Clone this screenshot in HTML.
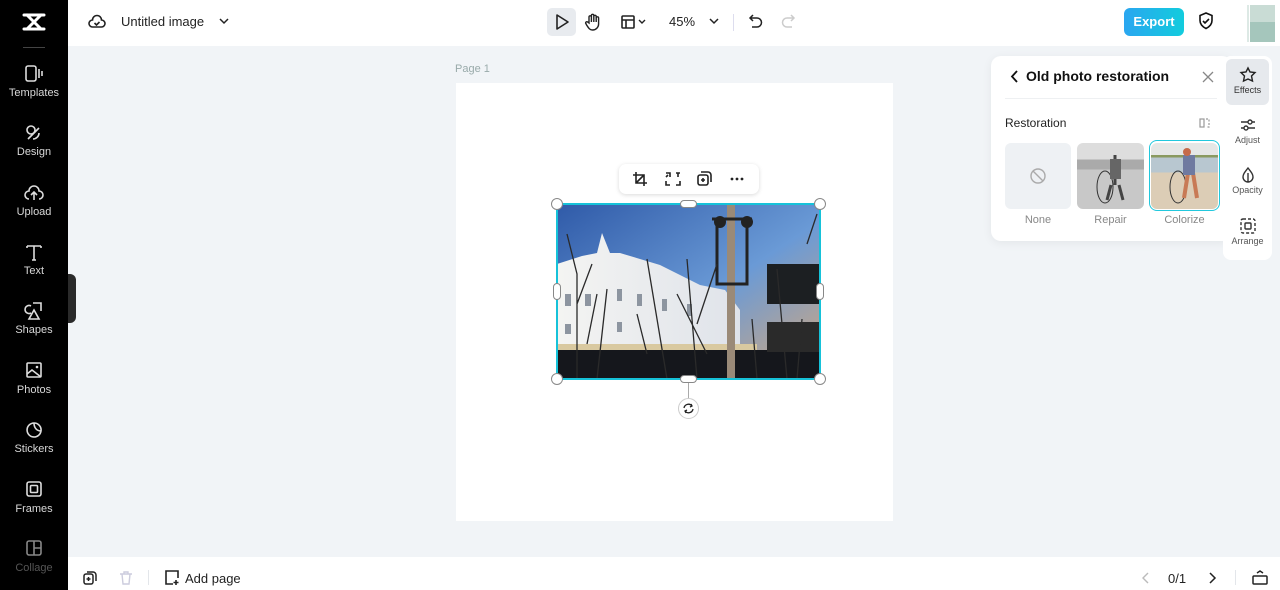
<!DOCTYPE html>
<html><head><meta charset="utf-8"><style>
*{margin:0;padding:0;box-sizing:border-box}
body{width:1280px;height:590px;overflow:hidden;background:#f1f4f7;font-family:"Liberation Sans",sans-serif;position:relative;color:#1f2329}
.abs{position:absolute}
.side{left:0;top:0;width:68px;height:590px;background:#000}
.si{position:absolute;left:0;width:68px;text-align:center;color:#d8d8d8;font-size:11px}
.si svg{display:block;margin:0 auto 4px}
.top{left:68px;top:0;width:1212px;height:46px;background:#fff}
.bot{left:68px;top:557px;width:1212px;height:33px;background:#fff}
svg{overflow:visible}
.rt{position:absolute;left:0;width:49px;text-align:center;font-size:9px;color:#555}
.rt svg{display:block;margin:0 auto 2px}
</style></head><body>
<div class="abs side">
 <svg class="abs" style="left:22px;top:12px" width="24" height="20" viewBox="0 0 24 20"><g fill="none" stroke="#fff" stroke-width="3" stroke-linecap="round"><path d="M2 3h20M2 17h20M5 3l14 14M19 3L5 17"/></g></svg>
 <div class="abs" style="left:23px;top:47px;width:22px;height:1px;background:#444"></div>
 <div class="si" style="top:65px"><svg width="20" height="18" viewBox="0 0 20 18"><rect x="2" y="1" width="10" height="15" rx="2" fill="none" stroke="#ddd" stroke-width="1.6"/><path d="M15 4v9M18 6v5" stroke="#ddd" stroke-width="1.6"/></svg>Templates</div>
 <div class="si" style="top:124px"><svg width="20" height="18" viewBox="0 0 20 18"><circle cx="7" cy="6" r="4" fill="none" stroke="#ddd" stroke-width="1.6"/><path d="M4 15l11-11M9 15a6 6 0 0 0 6-6" fill="none" stroke="#ddd" stroke-width="1.6"/></svg>Design</div>
 <div class="si" style="top:184px"><svg width="20" height="18" viewBox="0 0 20 18"><path d="M5 15a4 4 0 0 1 0-8 5 5 0 0 1 10 0 4 4 0 0 1 0 8M10 16V9M7 11l3-3 3 3" fill="none" stroke="#ddd" stroke-width="1.6"/></svg>Upload</div>
 <div class="si" style="top:243px"><svg width="20" height="18" viewBox="0 0 20 18"><path d="M3 3h14M10 3v14M3 3v2M17 3v2M8 17h4" fill="none" stroke="#ddd" stroke-width="1.6"/></svg>Text</div>
 <div class="si" style="top:302px"><svg width="20" height="18" viewBox="0 0 20 18"><path d="M7 4a4 4 0 1 0 0 7M9 1h8v8M10 8l-5 9h10z" fill="none" stroke="#ddd" stroke-width="1.6"/></svg>Shapes</div>
 <div class="si" style="top:362px"><svg width="20" height="18" viewBox="0 0 20 18"><rect x="3" y="1" width="14" height="14" rx="1" fill="none" stroke="#ddd" stroke-width="1.6"/><path d="M3 12l5-4 9 7" fill="none" stroke="#ddd" stroke-width="1.6"/><circle cx="13" cy="5" r="1.3" fill="#ddd"/></svg>Photos</div>
 <div class="si" style="top:421px"><svg width="20" height="18" viewBox="0 0 20 18"><path d="M10 2a7 7 0 1 0 7 8c-4 0-7-3-7-8z M10 2a7 7 0 0 1 7 8" fill="none" stroke="#ddd" stroke-width="1.6"/></svg>Stickers</div>
 <div class="si" style="top:481px"><svg width="20" height="18" viewBox="0 0 20 18"><rect x="3" y="1" width="14" height="14" rx="2" fill="none" stroke="#ddd" stroke-width="1.6"/><rect x="6.5" y="4.5" width="7" height="7" rx="1" fill="none" stroke="#ddd" stroke-width="1.6"/></svg>Frames</div>
 <div class="si" style="top:540px;color:#555"><svg width="20" height="18" viewBox="0 0 20 18"><rect x="3" y="1" width="14" height="14" rx="2" fill="none" stroke="#888" stroke-width="1.6"/><path d="M10 1v14M10 8h7" stroke="#888" stroke-width="1.6"/></svg>Collage</div>
</div>
<div class="abs" style="left:68px;top:274px;width:8px;height:49px;background:#2a2a2a;border-radius:0 6px 6px 0"></div>

<div class="abs top">
 <svg class="abs" style="left:20px;top:13px" width="18" height="18" viewBox="0 0 18 18"><path d="M4.5 14a3.5 3.5 0 0 1 0-7 4.5 4.5 0 0 1 9 0 3.5 3.5 0 0 1 0 7z M6.5 10l2 2 3-3" fill="none" stroke="#222" stroke-width="1.6"/></svg>
 <div class="abs" style="left:53px;top:14px;font-size:13px;color:#222">Untitled image</div>
 <svg class="abs" style="left:151px;top:18px" width="10" height="8"><path d="M1 1l4 4 4-4" fill="none" stroke="#222" stroke-width="1.5"/></svg>
 <div class="abs" style="left:479px;top:8px;width:29px;height:28px;background:#e8ebef;border-radius:5px"></div>
 <svg class="abs" style="left:487px;top:14px" width="14" height="16"><path d="M2 1l11 7-11 7z" fill="none" stroke="#222" stroke-width="1.6" stroke-linejoin="round"/></svg>
 <svg class="abs" style="left:517px;top:13px" width="16" height="18" viewBox="0 0 16 18"><path d="M4 10V4a1.2 1.2 0 0 1 2.4 0V9V2.5a1.2 1.2 0 0 1 2.4 0V9V3.5a1.2 1.2 0 0 1 2.4 0V9V5a1.2 1.2 0 0 1 2.4 0v6a6 6 0 0 1-6 6c-3 0-4-2-6-5l-1-2a1.2 1.2 0 0 1 2-1z" fill="none" stroke="#222" stroke-width="1.4"/></svg>
 <svg class="abs" style="left:553px;top:15px" width="26" height="14"><rect x="1" y="1" width="12" height="12" rx="1" fill="none" stroke="#222" stroke-width="1.6"/><path d="M1 5h12M5 5v8" stroke="#222" stroke-width="1.6"/><path d="M18 5l3 3 3-3" fill="none" stroke="#222" stroke-width="1.4"/></svg>
 <div class="abs" style="left:601px;top:14px;font-size:13px;color:#222">45%</div>
 <svg class="abs" style="left:641px;top:18px" width="10" height="8"><path d="M1 1l4 4 4-4" fill="none" stroke="#222" stroke-width="1.5"/></svg>
 <div class="abs" style="left:665px;top:14px;width:1px;height:17px;background:#dde"></div>
 <svg class="abs" style="left:681px;top:14px" width="14" height="16"><path d="M4 1L1 4l3 3M1 4h7a4.5 4.5 0 0 1 0 9H3" fill="none" stroke="#222" stroke-width="1.5"/></svg>
 <svg class="abs" style="left:713px;top:14px" width="14" height="16"><path d="M10 1l3 3-3 3M13 4H6a4.5 4.5 0 0 0 0 9h5" fill="none" stroke="#ccc" stroke-width="1.5"/></svg>
 <div class="abs" style="left:1056px;top:8px;width:60px;height:28px;border-radius:6px;background:linear-gradient(90deg,#2aa6f0,#12ccdd);color:#fff;font-weight:bold;font-size:13px;text-align:center;line-height:28px">Export</div>
 <svg class="abs" style="left:1130px;top:12px" width="16" height="18"><path d="M8 1l6 2.5v5c0 4-3 6.5-6 8-3-1.5-6-4-6-8v-5z M5 9l2 2 4-4" fill="none" stroke="#111" stroke-width="1.6"/></svg>
 <div class="abs" style="left:1162px;top:5px;width:45px;height:37px;background:linear-gradient(90deg,#fff 0 38%,#dde9e5 38% 42%,#fff 42% 44%,#c9dcd5 44% 100%)"></div>
 <div class="abs" style="left:1182px;top:22px;width:25px;height:20px;background:#a5c6bc"></div>
</div>

<div class="abs" style="left:455px;top:63px;font-size:11px;color:#9aa">Page 1</div>
<div class="abs" style="left:456px;top:83px;width:437px;height:438px;background:#fff"></div>

<div class="abs" style="left:619px;top:164px;width:140px;height:30px;background:#fff;border-radius:7px;box-shadow:0 1px 4px rgba(0,0,0,.15)"></div>
<svg class="abs" style="left:632px;top:171px" width="120" height="16" viewBox="0 0 120 16">
 <g fill="none" stroke="#222" stroke-width="1.6"><path d="M4 1v11h11M1 4h11v11M4 12L12 4"/>
 <path d="M34 2h4v4M34 10v4h4M44 2h4M46 2v4M48 10v4h-4M34 6l2-2"/>
 <rect x="66" y="4" width="10" height="10" rx="2"/><path d="M69 1h7a3 3 0 0 1 3 3v7M71 7v4M69 9h4"/></g>
 <circle cx="100" cy="8" r="1.4" fill="#222"/><circle cx="105" cy="8" r="1.4" fill="#222"/><circle cx="110" cy="8" r="1.4" fill="#222"/>
</svg>

<svg class="abs" style="left:557px;top:204px" width="263" height="175" viewBox="0 0 263 175">
 <defs><linearGradient id="sky" x1="0" y1="0" x2="1" y2="1"><stop offset="0" stop-color="#2f5aa8"/><stop offset=".55" stop-color="#6a9ad6"/><stop offset="1" stop-color="#d6a87a"/></linearGradient>
 <linearGradient id="bld" x1="0" y1="0" x2="1" y2="0"><stop offset="0" stop-color="#f4f4f2"/><stop offset="1" stop-color="#dfe3ea"/></linearGradient></defs>
 <rect width="263" height="175" fill="url(#sky)"/>
 <path d="M0 60l25-8 15-3 5-20 8 20 10 0 40 12 40 20 25 5 15 20v60H0z" fill="url(#bld)"/>
 <g fill="#8d95a0"><rect x="8" y="90" width="6" height="12"/><rect x="28" y="90" width="6" height="12"/><rect x="60" y="85" width="5" height="12"/><rect x="80" y="90" width="5" height="12"/><rect x="105" y="95" width="5" height="12"/><rect x="130" y="100" width="5" height="12"/><rect x="8" y="120" width="6" height="10"/><rect x="60" y="118" width="5" height="10"/></g>
 <path d="M0 140h200v6H0z" fill="#d9c9a0"/>
 <rect x="0" y="146" width="263" height="29" fill="#15171c"/>
 <rect x="210" y="118" width="53" height="30" fill="#2a2a2a"/>
 <rect x="210" y="60" width="53" height="40" fill="#1c1f22"/>
 <rect x="170" y="0" width="8" height="175" fill="#9a8a78"/>
 <path d="M155 15h40M160 15v65h30V15" fill="none" stroke="#222" stroke-width="3"/>
 <circle cx="163" cy="18" r="6" fill="#222"/><circle cx="190" cy="18" r="6" fill="#222"/>
 <g stroke="#2a2a2a" stroke-width="1.3" fill="none"><path d="M20 175V70l-10-40M20 100l15-40M30 140l10-50M40 175l10-90M140 175l-10-120M140 120l20-60M150 150l-30-60M110 175l-20-120M90 150l-10-40M230 175l-10-110M250 40l10-30M240 175l5-60M200 175l-5-60"/></g>
 <rect x="0" y="0" width="263" height="175" fill="none" stroke="#16c2d9" stroke-width="2"/>
</svg>
<div class="abs" style="left:551px;top:198px;width:12px;height:12px;border-radius:50%;background:#fff;border:1px solid #888"></div>
<div class="abs" style="left:814px;top:198px;width:12px;height:12px;border-radius:50%;background:#fff;border:1px solid #888"></div>
<div class="abs" style="left:551px;top:373px;width:12px;height:12px;border-radius:50%;background:#fff;border:1px solid #888"></div>
<div class="abs" style="left:814px;top:373px;width:12px;height:12px;border-radius:50%;background:#fff;border:1px solid #888"></div>
<div class="abs" style="left:680px;top:200px;width:17px;height:8px;border-radius:4px;background:#fff;border:1px solid #888"></div>
<div class="abs" style="left:680px;top:375px;width:17px;height:8px;border-radius:4px;background:#fff;border:1px solid #888"></div>
<div class="abs" style="left:553px;top:283px;width:8px;height:17px;border-radius:4px;background:#fff;border:1px solid #888"></div>
<div class="abs" style="left:816px;top:283px;width:8px;height:17px;border-radius:4px;background:#fff;border:1px solid #888"></div>
<div class="abs" style="left:688px;top:383px;width:1px;height:15px;background:#aaa"></div>
<div class="abs" style="left:678px;top:398px;width:21px;height:21px;border-radius:50%;background:#fff;border:1px solid #ccc"></div>
<svg class="abs" style="left:683px;top:403px" width="11" height="11"><path d="M1 5a4.5 4.5 0 0 1 8-2M10 6a4.5 4.5 0 0 1-8 2M8 1l1 2-2 1M3 10L2 8l2-1" fill="none" stroke="#222" stroke-width="1.3"/></svg>

<div class="abs" style="left:991px;top:56px;width:241px;height:185px;background:#fff;border-radius:10px;box-shadow:0 2px 10px rgba(0,0,0,.06)"></div>
<svg class="abs" style="left:1011px;top:70px" width="8" height="13"><path d="M6 1L1 6.5 6 12" fill="none" stroke="#111" stroke-width="1.8"/></svg>
<div class="abs" style="left:1026px;top:68px;font-size:14px;font-weight:bold;color:#111">Old photo restoration</div>
<svg class="abs" style="left:1202px;top:71px" width="12" height="12"><path d="M1 1l10 10M11 1L1 11" stroke="#888" stroke-width="1.3"/></svg>
<div class="abs" style="left:1005px;top:98px;width:212px;height:1px;background:#eef0f2"></div>
<div class="abs" style="left:1005px;top:116px;font-size:12px;color:#222">Restoration</div>
<svg class="abs" style="left:1199px;top:117px" width="12" height="12"><rect x="1" y="2" width="4" height="8" fill="none" stroke="#999" stroke-width="1.2"/><path d="M7 2h3v8H7" fill="none" stroke="#999" stroke-dasharray="2 1.5" stroke-width="1.2"/></svg>
<div class="abs" style="left:1005px;top:143px;width:66px;height:66px;border-radius:6px;background:#eef1f4"></div>
<svg class="abs" style="left:1030px;top:168px" width="16" height="16"><circle cx="8" cy="8" r="7" fill="none" stroke="#aaa" stroke-width="1.4"/><path d="M3 3l10 10" stroke="#aaa" stroke-width="1.4"/></svg>
<div class="abs" style="left:1077px;top:143px;width:67px;height:66px;border-radius:6px;background:linear-gradient(180deg,#ddd 0 25%,#aaa 25% 40%,#c8c8c8 40%)"></div>
<svg class="abs" style="left:1077px;top:143px" width="67" height="66"><ellipse cx="28" cy="44" rx="8" ry="16" fill="none" stroke="#333"/><path d="M38 12v30M34 42l-4 15M42 42l4 15" stroke="#444" stroke-width="3"/><rect x="33" y="16" width="11" height="20" fill="#666"/></svg>
<div class="abs" style="left:1149px;top:140px;width:71px;height:71px;border-radius:8px;border:1.5px solid #22c8dd"></div>
<div class="abs" style="left:1151px;top:143px;width:67px;height:66px;border-radius:6px;background:linear-gradient(180deg,#e5e7e6 0 18%,#8a9a60 18% 22%,#b8c7d0 22% 45%,#dccdb6 45%)"></div>
<svg class="abs" style="left:1151px;top:143px" width="67" height="66"><ellipse cx="27" cy="44" rx="8" ry="16" fill="none" stroke="#333"/><path d="M37 30l-4 25M42 30l4 25" stroke="#c87a55" stroke-width="4"/><rect x="32" y="12" width="12" height="20" fill="#6f7aa0"/><circle cx="36" cy="9" r="4" fill="#c66a4a"/></svg>
<div class="abs" style="left:1005px;top:214px;width:66px;text-align:center;font-size:11px;color:#888">None</div>
<div class="abs" style="left:1077px;top:214px;width:67px;text-align:center;font-size:11px;color:#888">Repair</div>
<div class="abs" style="left:1151px;top:214px;width:67px;text-align:center;font-size:11px;color:#888">Colorize</div>

<div class="abs" style="left:1223px;top:56px;width:49px;height:204px;background:#fff;border-radius:8px">
 <div class="abs" style="left:3px;top:3px;width:43px;height:46px;background:#e6e9ed;border-radius:6px"></div>
 <div class="rt" style="top:11px;color:#333"><svg width="16" height="16"><path d="M8 1l2 4 5 .5-3.5 3.5 1 5L8 12l-4.5 2 1-5L1 5.5 6 5z" fill="none" stroke="#222" stroke-width="1.4"/></svg>Effects</div>
 <div class="rt" style="top:61px"><svg width="16" height="16"><path d="M1 5h14M1 11h14" stroke="#333" stroke-width="1.4"/><circle cx="10" cy="5" r="2" fill="#fff" stroke="#333" stroke-width="1.4"/><circle cx="6" cy="11" r="2" fill="#fff" stroke="#333" stroke-width="1.4"/></svg>Adjust</div>
 <div class="rt" style="top:111px"><svg width="16" height="16"><path d="M8 1c3 4 5 6 5 9a5 5 0 0 1-10 0c0-3 2-5 5-9zM8 6v9" fill="none" stroke="#333" stroke-width="1.4"/></svg>Opacity</div>
 <div class="rt" style="top:162px"><svg width="16" height="16"><rect x="1" y="1" width="14" height="14" rx="2" fill="none" stroke="#333" stroke-width="1.4" stroke-dasharray="3 2"/><rect x="5" y="5" width="6" height="6" rx="1" fill="none" stroke="#333" stroke-width="1.4"/></svg>Arrange</div>
</div>

<div class="abs bot">
 <svg class="abs" style="left:15px;top:14px" width="14" height="14"><rect x="1" y="3" width="9" height="10" rx="2" fill="none" stroke="#222" stroke-width="1.5"/><path d="M4 1h6a3 3 0 0 1 3 3v6M5.5 6v4M3.5 8h4" fill="none" stroke="#222" stroke-width="1.5"/></svg>
 <svg class="abs" style="left:51px;top:14px" width="14" height="14"><path d="M1 3h12M3 3l1 10h6l1-10M5 3V1h4v2" fill="none" stroke="#ccd" stroke-width="1.4"/></svg>
 <div class="abs" style="left:80px;top:13px;width:1px;height:15px;background:#e3e6ea"></div>
 <svg class="abs" style="left:96px;top:13px" width="16" height="16"><path d="M9 14H2V1h12v7M12 10v5M9.5 12.5h5" fill="none" stroke="#222" stroke-width="1.6"/></svg>
 <div class="abs" style="left:117px;top:14px;font-size:13px;color:#222">Add page</div>
 <svg class="abs" style="left:1074px;top:15px" width="8" height="12"><path d="M6 1L1 6l5 5" fill="none" stroke="#bbb" stroke-width="1.4"/></svg>
 <div class="abs" style="left:1100px;top:14px;font-size:13px;color:#222">0/1</div>
 <svg class="abs" style="left:1140px;top:15px" width="8" height="12"><path d="M2 1l5 5-5 5" fill="none" stroke="#222" stroke-width="1.5"/></svg>
 <div class="abs" style="left:1167px;top:13px;width:1px;height:15px;background:#e3e6ea"></div>
 <svg class="abs" style="left:1184px;top:13px" width="16" height="15"><rect x="1" y="6" width="14" height="8" rx="1" fill="none" stroke="#222" stroke-width="1.5"/><path d="M5 3l3-2 3 2" fill="none" stroke="#222" stroke-width="1.5"/></svg>
</div>
</body></html>
